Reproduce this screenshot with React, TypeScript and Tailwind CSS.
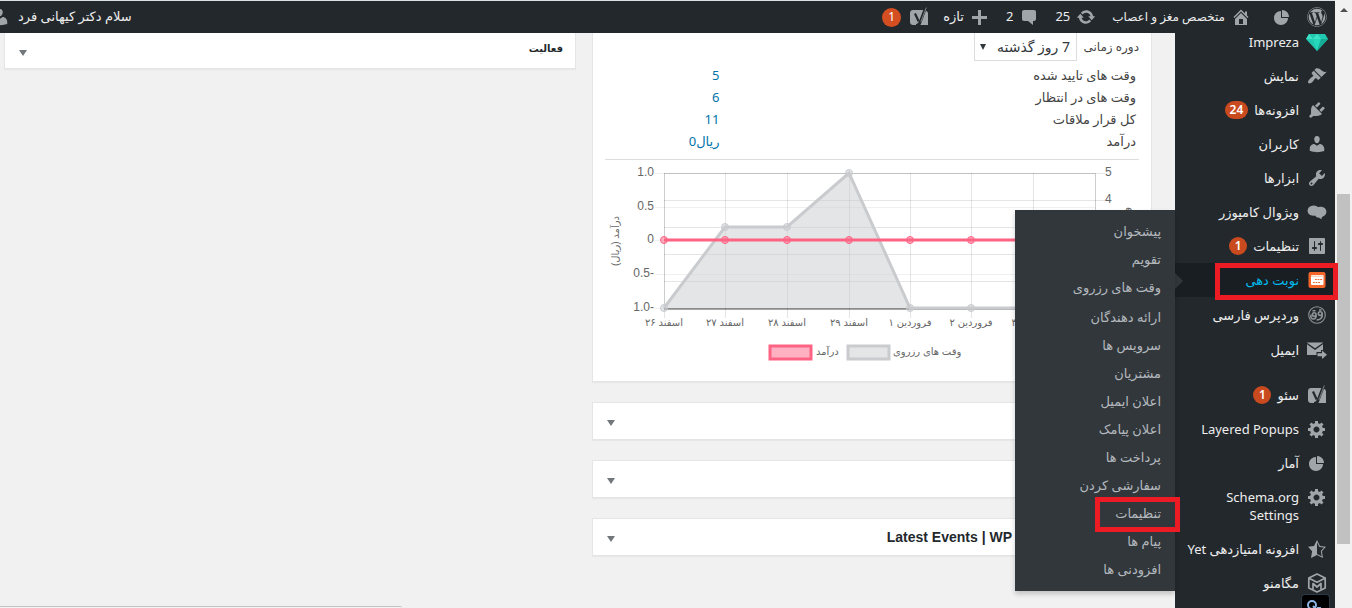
import type { ReactNode } from "react";
import clsx from "clsx";
import { FaWordpress } from "react-icons/fa";

const PATHS = {
  pie: "M10 10V3c3.87 0 7 3.13 7 7h-7zM9 4v7h7c0 3.87-3.13 7-7 7s-7-3.13-7-7 3.13-7 7-7z",
  home: "M16 8.5l1.53 1.53-1.06 1.06L10 4.6l-6.47 6.49-1.06-1.06L10 2.5l4 4v-2h2v4zm-6-2.46l6 5.99V18H4v-5.97zM12 17v-5H8v5h4z",
  update:
    "M10.2 3.28c3.53 0 6.43 2.61 6.92 6h2.08l-3.5 4-3.5-4h2.32c-.45-1.97-2.21-3.45-4.32-3.45-1.45 0-2.73.71-3.54 1.78L4.95 5.66C6.23 4.2 8.11 3.28 10.2 3.28zm-.4 13.44c-3.52 0-6.43-2.61-6.92-6H.8l3.5-4c1.17 1.33 2.33 2.67 3.5 4H5.48c.45 1.97 2.21 3.45 4.32 3.45 1.45 0 2.73-.71 3.54-1.78l1.71 1.95c-1.28 1.46-3.15 2.38-5.25 2.38z",
  comment:
    "M5 3h10c1.1 0 2 .9 2 2v7c0 1.1-.9 2-2 2h-1v4l-5-4H5c-1.1 0-2-.9-2-2V5c0-1.1.9-2 2-2z",
  plus: "M17 9v3h-6v6H8v-6H2V9h6V3h3v6h6z",
  brush:
    "M14.48 11.06L7.41 3.99l1.5-1.5c.5-.56 2.3-.47 3.51.32 1.21.8 1.43 1.28 2.91 2.1 1.18.64 2.45 1.26 4.45.85zm-.71.71L6.7 4.7 4.93 6.47c-.39.39-.39 1.02 0 1.41l1.06 1.06c.39.39.39 1.03 0 1.42-.6.6-1.43 1.11-2.21 1.69-.35.26-.7.53-1.01.84C1.43 14.23.4 16.08 1.4 17.07c.99 1 2.84-.03 4.18-1.36.31-.31.58-.66.85-1.02.57-.78 1.08-1.61 1.69-2.21.39-.39 1.02-.39 1.41 0l1.06 1.06c.39.39 1.02.39 1.41 0z",
  plug: "M13.11 4.36L9.87 7.6 8 5.73l3.24-3.24c.35-.34 1.05-.2 1.56.32.52.51.66 1.21.31 1.55zm-8 1.77l.91-1.12 9.01 9.01-1.19.84c-.71.71-2.63 1.16-3.82 1.16H6.14L4.9 17.26c-.59.59-1.54.59-2.12 0-.59-.58-.59-1.53 0-2.12l1.24-1.24v-3.88c0-1.13.4-3.19 1.09-3.89zm7.26 3.97l3.24-3.24c.34-.35 1.04-.21 1.55.31.52.51.66 1.21.31 1.55l-3.24 3.25z",
  user: "M10 9.25c-2.27 0-2.73-3.44-2.73-3.44C7 4.02 7.82 2 9.97 2c2.16 0 2.98 2.02 2.71 3.81 0 0-.41 3.44-2.68 3.44zm0 2.57L12.72 10c2.39 0 4.52 2.33 4.52 4.53v2.49s-3.65 1.13-7.24 1.13c-3.65 0-7.24-1.13-7.24-1.13v-2.49c0-2.25 1.94-4.48 4.47-4.48z",
  wrench:
    "M16.68 9.77c-1.34 1.34-3.3 1.67-4.95.99l-5.41 6.52c-.99.99-2.59.99-3.58 0s-.99-2.59 0-3.57l6.52-5.42c-.68-1.65-.35-3.61.99-4.95 1.28-1.28 3.12-1.62 4.72-1.06l-2.89 2.89 2.82 2.82 2.86-2.87c.53 1.58.18 3.39-1.08 4.65zM3.81 16.21c.4.39 1.04.39 1.43 0 .4-.4.4-1.04 0-1.43-.39-.4-1.03-.4-1.43 0-.39.39-.39 1.03 0 1.43z",
  composer:
    "M6.5 3.5C8.6 3.3 9.6 4.6 11 4.9c1.5.2 2.6-.3 4.3.1 2.3.5 4 2.3 4.1 4.6.1 2.3-1.3 4-3 4.6-.8.3-1.3.5-1.5 1.1l-.5 2-2.3-1.6C9.5 15.6 8.8 14.6 8.2 13.4 4.3 14.4.6 12.3.6 8.700c0-2.900 2.600-5 5.900-5.200z",
  sliders:
    "M18 17V3c0-.55-.45-1-1-1H3c-.55 0-1 .45-1 1v14c0 .55.45 1 1 1h14c.55 0 1-.45 1-1zM8 11h1c.55 0 1 .45 1 1s-.45 1-1 1H8v1.5c0 .28-.22.5-.5.5s-.5-.22-.5-.5V13H6c-.55 0-1-.45-1-1s.45-1 1-1h1V5.5c0-.28.22-.5.5-.5s.5.22.5.5V11zm5-2h-1c-.55 0-1-.45-1-1s.45-1 1-1h1V5.5c0-.28.22-.5.5-.5s.5.22.5.5V7h1c.55 0 1 .45 1 1s-.45 1-1 1h-1v5.5c0 .28-.22.5-.5.5s-.5-.22-.5-.5V9z",
  gear: "M18 12h-2.18c-.17.7-.44 1.35-.81 1.93l1.54 1.54-2.1 2.1-1.54-1.54c-.58.36-1.23.63-1.91.79V19H8v-2.18c-.68-.16-1.33-.43-1.91-.79l-1.54 1.54-2.12-2.12 1.54-1.54c-.36-.58-.63-1.23-.79-1.91H1V9.03h2.17c.16-.7.44-1.35.8-1.94L2.43 5.55l2.1-2.1 1.54 1.54c.58-.37 1.24-.64 1.93-.81V2h3v2.18c.68.16 1.33.43 1.91.79l1.54-1.54 2.12 2.12-1.54 1.54c.36.59.64 1.24.8 1.94H18V12zm-8.500 1.500c1.660 0 3-1.340 3-3s-1.340-3-3-3-3 1.340-3 3 1.340 3 3 3z",
  starHalf:
    "M10 1L7 7l-6 .75 4.13 4.62L4 19l6-3 6 3-1.12-6.63L19 7.75 13 7zm0 2.24l2.34 4.69 4.65.58-3.18 3.56.87 5.15L10 14.88V3.24z",
};

type IconName = keyof typeof PATHS;

function Icon({ name }: { name: IconName }) {
  return (
    <svg viewBox="0 0 20 20" className="h-5 w-5 shrink-0 fill-[#a0a5aa]" aria-hidden="true">
      <path d={PATHS[name]} fillRule="evenodd" />
    </svg>
  );
}

function GemIcon() {
  return (
    <svg viewBox="0 0 22 20" className="h-5 w-[22px] shrink-0" aria-hidden="true">
      <path d="M3 2h16l3 5-11 12L0 7z" fill="#1fc8ae" />
      <path d="M3 2l4 5H0zM11 2l4 5H7z" fill="#3fe0c6" />
      <path d="M7 7h8l-4 12z" fill="#27d7bb" />
      <path d="M15 7h7L11 19z" fill="#16ab95" />
    </svg>
  );
}

function YoastIcon() {
  return (
    <svg viewBox="0 0 20 20" className="h-5 w-5 shrink-0" fill="none" aria-hidden="true">
      <path d="M4 3h11.500L10.500 18H4c-1.700 0-3-1.300-3-3V6c0-1.700 1.300-3 3-3z" fill="#a0a5aa" />
      <path d="M16.500 3.400C18 3.900 19 5 19 6.500V18h-8z" fill="#a0a5aa" />
      <path d="M16.500 1L11 15.500C10.200 17.600 9 18.500 7 18.500" stroke="#23282d" strokeWidth="2.800" />
      <path d="M6 6.500l3.700 8" stroke="#23282d" strokeWidth="2.200" />
      <path d="M17.300 .5L11.800 15" stroke="#a0a5aa" strokeWidth=".7" />
    </svg>
  );
}

function BookingIcon() {
  return (
    <svg viewBox="0 0 20 20" className="h-5 w-5 shrink-0" aria-hidden="true">
      <rect x="1.500" y="2" width="17" height="16" rx="2" fill="#f4652a" />
      <rect x="4" y="5" width="12.500" height="10" rx="1" fill="#fff" />
      <path d="M4 5.500h12.500v1.500H4z" fill="#ffd2bd" />
      <path d="M8 9.500h7M6 12.500h7" stroke="#f4652a" strokeDasharray="1.800 0.800" />
    </svg>
  );
}

function PersianWpIcon() {
  return (
    <svg viewBox="0 0 20 20" className="h-5 w-5 shrink-0" fill="none" stroke="#8f9498" strokeWidth="1.600" aria-hidden="true">
      <circle cx="10" cy="10" r="8.300" strokeWidth="1.100" />
      <circle cx="7.200" cy="9.600" r="1.800" />
      <circle cx="13.200" cy="8.600" r="1.900" />
      <path d="M9 9.600c.4 2.800-.6 4.400-2.600 4.400s-3-1.800-2.400-4.400M15.200 8.600c.4 4-1.400 6.600-5.600 6.200M5.500 5.800h3M12 5h2.500" />
    </svg>
  );
}

function MailIcon() {
  return (
    <svg viewBox="0 0 20 20" className="h-5 w-5 shrink-0 fill-[#a0a5aa]" aria-hidden="true">
      <path d="M0 4.200L8 10l8-5.800V10h-2v2H9.500v3H0z" />
      <path d="M0 2.500h16v.3L8 8.200 0 2.800z" />
      <path d="M10.500 13.200H15v-2.700l5 4.200-5 4.300v-2.800h-4.500z" />
    </svg>
  );
}

function MegaMenuIcon() {
  return (
    <svg viewBox="0 0 20 20" className="h-5 w-5 shrink-0" fill="none" stroke="#a0a5aa" strokeWidth="1.700" strokeLinejoin="round" aria-hidden="true">
      <path d="M10 1l8.200 4v10L10 19l-8.200-4V5z" />
      <path d="M2 5.200l8 4 8-4M6 16.500v-6l4 3.500 4-3.500v6" />
    </svg>
  );
}

function Badge({ children }: { children: ReactNode }) {
  return (
    <span className="flex h-[18px] min-w-[18px] items-center justify-center rounded-full bg-[#ca4a1f] px-[5px] text-[12px] font-semibold text-white">
      {children}
    </span>
  );
}

const SUBMENU = [
  "پیشخوان",
  "تقویم",
  "وقت های رزروی",
  "ارائه دهندگان",
  "سرویس ها",
  "مشتریان",
  "اعلان ایمیل",
  "اعلان پیامک",
  "پرداخت ها",
  "سفارشی کردن",
  "تنظیمات",
  "پیام ها",
  "افزودنی ها",
];

function Submenu() {
  return (
    <ul className="absolute -top-[53px] right-full w-40 bg-[#32373c] pt-2 pb-[7px] shadow-[0_3px_5px_rgba(0,0,0,0.2)]">
      {SUBMENU.map((label, i) => (
        <li key={label} className={clsx("relative", i === 3 && "pt-0.5")}>
          <a href="#" className="flex h-7 items-center px-3.5 text-[13px] text-[#b4b9be]">
            {label}
          </a>
          {label === "تنظیمات" && (
            <span className="pointer-events-none absolute -top-[3px] -right-[5px] h-[35px] w-[85px] border-5 border-[#ed1c24]" />
          )}
        </li>
      ))}
    </ul>
  );
}

type MenuItem = {
  label: string;
  icon: ReactNode;
  badge?: string;
  active?: boolean;
  className?: string;
};

const MENU: MenuItem[] = [
  { label: "Impreza", icon: <GemIcon /> },
  { label: "نمایش", icon: <Icon name="brush" /> },
  { label: "افزونه‌ها", icon: <Icon name="plug" />, badge: "24" },
  { label: "کاربران", icon: <Icon name="user" /> },
  { label: "ابزارها", icon: <Icon name="wrench" /> },
  { label: "ویژوال کامپوزر", icon: <Icon name="composer" /> },
  { label: "تنظیمات", icon: <Icon name="sliders" />, badge: "1" },
  { label: "نوبت دهی", icon: <BookingIcon />, active: true },
  { label: "وردپرس فارسی", icon: <PersianWpIcon />, className: "pt-px" },
  { label: "ایمیل", icon: <MailIcon />, className: "pt-px" },
  { label: "سئو", icon: <YoastIcon />, badge: "1", className: "mt-[11px]" },
  { label: "Layered Popups", icon: <Icon name="gear" /> },
  { label: "آمار", icon: <Icon name="pie" /> },
  { label: "Schema.org Settings", icon: <Icon name="gear" /> },
  { label: "افزونه امتیازدهی Yet", icon: <Icon name="starHalf" /> },
  { label: "مگامنو", icon: <MegaMenuIcon /> },
];

function Sidebar() {
  return (
    <nav className="relative z-10 -mt-2 w-40 shrink-0 bg-[#23282d]">
      <ul>
        {MENU.map((item) => (
          <li key={item.label} className={clsx("relative", item.className)}>
            <a
              href="#"
              className={clsx(
                "flex items-start text-[13px] leading-[18px]",
                item.active ? "bg-[#191e23] text-[#00b9eb]" : "text-[#eee]"
              )}
            >
              <span className="flex h-[34px] w-9 shrink-0 items-center justify-center">{item.icon}</span>
              <span className={clsx("py-2", item.label.startsWith("Schema") ? "w-24" : "whitespace-nowrap")}>
                {item.label}
              </span>
              {item.badge && (
                <span className="py-2 ps-1.5">
                  <Badge>{item.badge}</Badge>
                </span>
              )}
            </a>
            {item.active && (
              <>
                <span className="absolute top-2.5 left-0 border-y-8 border-l-8 border-y-transparent border-l-[#32373c]" />
                <Submenu />
                <span className="pointer-events-none absolute top-0 -right-[3px] h-[37px] w-[123px] border-5 border-[#ed1c24]" />
              </>
            )}
          </li>
        ))}
      </ul>
    </nav>
  );
}

function AdminBar() {
  return (
    <header className="relative z-20 flex h-[33px] shrink-0 items-center border-t border-[#dcdfe3] bg-[#23282d] text-[13px] text-[#eee]">
      <a href="#" aria-label="WordPress" className="flex w-9 justify-center">
        <FaWordpress className="h-5 w-5 text-[#a0a5aa]" />
      </a>
      <a href="#" aria-label="Statistics" className="flex w-[34px] justify-center">
        <Icon name="pie" />
      </a>
      <a href="#" className="ms-3.5 flex items-center gap-1.5 text-[12px]">
        <Icon name="home" />
        متخصص مغز و اعصاب
      </a>
      <a href="#" className="ms-4 flex items-center gap-1.5">
        <Icon name="update" />
        25
      </a>
      <a href="#" className="ms-4 flex items-center gap-1.5">
        <Icon name="comment" />2
      </a>
      <a href="#" className="ms-4 flex items-center gap-1.5">
        <Icon name="plus" />
        تازه
      </a>
      <a href="#" className="ms-3.5 flex items-center gap-2">
        <YoastIcon />
        <span className="flex h-[19px] w-[19px] items-center justify-center rounded-full bg-[#d54e21] text-[12px] text-white">1</span>
      </a>
      <a href="#" className="ms-auto -me-2.5 flex items-center gap-2">
        سلام دکتر کیهانی فرد
        <Icon name="user" />
      </a>
    </header>
  );
}

function Toggle({ label }: { label: string }) {
  return (
    <button type="button" aria-label={label} className="flex h-9 w-9 items-center justify-center pt-1">
      <span className="border-x-4 border-t-6 border-x-transparent border-t-[#72777c]" />
    </button>
  );
}

function CollapsedBox({ title, name }: { title?: ReactNode; name: string }) {
  return (
    <section className="flex items-center justify-between border border-[#e5e5e5] bg-white shadow-[0_1px_1px_rgba(0,0,0,0.04)]">
      <h2 className="px-3">{title}</h2>
      <Toggle label={name} />
    </section>
  );
}

// the last tick has no label of its own
const TICKS = [
  { x: 59, label: "اسفند ۲۶" },
  { x: 120, label: "اسفند ۲۷" },
  { x: 182, label: "اسفند ۲۸" },
  { x: 244, label: "اسفند ۲۹" },
  { x: 305, label: "فروردین ۱" },
  { x: 366, label: "فروردین ۲" },
  { x: 428, label: "فروردین ۳" },
  { x: 490, label: "" },
];

const BOOKINGS = [148, 67, 67, 13, 148, 148, 148, 148];

const LEFT_AXIS = [
  { y: 13, label: "1.0" },
  { y: 47, label: "0.5" },
  { y: 80, label: "0" },
  { y: 114, label: "0.5-" },
  { y: 148, label: "1.0-" },
];

const RIGHT_AXIS = [13, 40, 67, 94, 121, 148];

function Chart() {
  const line = TICKS.map((tick, i) => `${tick.x},${BOOKINGS[i]}`).join(" ");

  return (
    <svg
      viewBox="0 0 534 210"
      direction="ltr"
      className="block w-full fill-[#666] font-['Liberation_Sans','DejaVu_Sans',sans-serif] text-[12px]"
      role="img"
    >
      <g stroke="#000" strokeOpacity="0.1" shapeRendering="crispEdges">
        {TICKS.map((tick) => (
          <path key={tick.x} d={`M${tick.x + 0.5} 13v145`} />
        ))}
        {LEFT_AXIS.map(({ y }) => (
          <path key={y} d={`M50 ${y + 0.5}H490`} strokeOpacity="0.06" />
        ))}
        {RIGHT_AXIS.map((y) => (
          <path key={y} d={`M59 ${y + 0.5}H500`} />
        ))}
        <path d="M59.5 148V13.5H490.5V148" fill="none" strokeOpacity="0.1" />
        <path d="M59 148.5H490" strokeWidth="2" strokeOpacity="0.35" />
      </g>

      <polygon points={`59,148 ${line} 490,148`} fill="#c9cbcf" fillOpacity="0.5" />
      <polyline points={line} fill="none" stroke="#c9cbcf" strokeWidth="3" />
      {TICKS.map((tick, i) => (
        <circle key={tick.x} cx={tick.x} cy={BOOKINGS[i]} r="3.5" fill="#c9cbcf" fillOpacity="0.5" stroke="#c9cbcf" />
      ))}
      <path d="M59 80H490" stroke="#ff6384" strokeWidth="3" />
      {TICKS.map((tick) => (
        <circle key={tick.x} cx={tick.x} cy="80" r="3.5" fill="#ff6384" fillOpacity="0.5" stroke="#ff6384" />
      ))}

      {LEFT_AXIS.map(({ y, label }) => (
        <text key={y} x="49" y={y + 3} textAnchor="end">
          {label}
        </text>
      ))}
      <text x="500" y="16">5</text>
      <text x="500" y="43">4</text>

      <g className="text-[10px]">
        {TICKS.filter((tick) => tick.label).map((tick) => (
          <text key={tick.x} x={tick.x} y="166" textAnchor="middle">
            {tick.label}
          </text>
        ))}
        <text transform="translate(14 81) rotate(-90)" textAnchor="middle" direction="rtl">
          درآمد (ریال)
        </text>
        <text transform="translate(524 81) rotate(-90)" textAnchor="middle">
          وقت های رزروی
        </text>
        <rect x="165" y="186" width="41" height="13" fill="#ffb1c1" stroke="#ff6384" strokeWidth="3" />
        <text x="211" y="195">درآمد</text>
        <rect x="243" y="186" width="41" height="13" fill="#e4e5e7" stroke="#c9cbcf" strokeWidth="3" />
        <text x="288" y="195">وقت های رزروی</text>
      </g>
    </svg>
  );
}

const STATS = [
  ["وقت های تایید شده", "5"],
  ["وقت های در انتظار", "6"],
  ["کل قرار ملاقات", "11"],
  ["درآمد", "ریال0"],
];

function StatsBox() {
  return (
    <section className="border border-t-0 border-[#e5e5e5] bg-white px-3 pb-[11px] shadow-[0_1px_1px_rgba(0,0,0,0.04)]">
      <div className="flex items-center justify-start text-[12px] text-[#444]">
        <label htmlFor="period" className="w-[62px]">دوره زمانی</label>
        <div className="relative">
          <select
            id="period"
            className="h-7 w-[103px] appearance-none border border-t-0 border-[#ddd] bg-white ps-1.5 text-[14px] text-[#32373c]"
          >
            <option>7 روز گذشته</option>
          </select>
          <span className="pointer-events-none absolute top-[11px] left-1.5 border-x-3 border-t-6 border-x-transparent border-t-[#32373c]" />
        </div>
      </div>

      <table className="mt-[3px] w-full text-[13px]">
        <tbody>
          {STATS.map(([name, value]) => (
            <tr key={name} className="h-[22px] leading-5">
              <th scope="row" className="w-[78%] px-[3px] text-start font-normal text-[#444]">
                {name}
              </th>
              <td className="px-[3px] text-[#0073aa]">
                <a href="#">{value}</a>
              </td>
            </tr>
          ))}
        </tbody>
      </table>

      <div className="mt-[7px] border-t border-[#ddd]">
        <Chart />
      </div>
    </section>
  );
}

export default function App() {
  return (
    <div className="relative flex h-screen overflow-hidden bg-[#f1f1f1] font-['Noto_Sans','DejaVu_Sans',sans-serif]">
      <div dir="rtl" className="relative z-10 flex min-w-0 flex-1 flex-col">
        <AdminBar />
        <div className="flex min-h-0 flex-1">
          <Sidebar />
          <main className="grid flex-1 grid-cols-[560fr_572fr] items-start gap-4 pr-[23px] pl-1">
            <div className="flex flex-col gap-5">
              <StatsBox />
              <CollapsedBox name="Toggle panel" />
              <CollapsedBox name="Toggle panel" />
              <CollapsedBox
                name="Toggle panel"
                title={
                  <span dir="ltr" className="block pr-[127px] font-['Liberation_Sans',sans-serif] text-[14px] font-bold text-[#23282d]">
                    Latest Events | WP
                  </span>
                }
              />
            </div>
            <section className="flex h-9 items-center justify-between border border-t-0 border-[#e5e5e5] bg-white shadow-[0_1px_1px_rgba(0,0,0,0.04)]">
              <h2 className="px-3 pb-1 text-[10px] font-bold text-[#23282d]">فعالیت</h2>
              <Toggle label="Toggle panel" />
            </section>
          </main>
        </div>
        <div dir="ltr" className="absolute right-[5px] bottom-0 z-20 h-3.5 w-[29px] overflow-hidden rounded-t-sm border border-b-0 border-[#2c3947] bg-black">
          <svg viewBox="0 0 28 14" className="h-3.5 w-7" fill="none" stroke="#8db4e2" strokeWidth="2" aria-hidden="true">
            <circle cx="10" cy="10" r="4" />
            <path d="M11 11l3 3M15 13h4" />
          </svg>
        </div>
        <div className="absolute bottom-0 left-0 h-0.5 w-[402px] rounded-tr-sm border-t border-[#c4c4c4] bg-[#f3f3f3]" />
      </div>

      <div className="flex w-[17px] shrink-0 flex-col items-center bg-[#f1f1f1]" aria-hidden="true">
        <span className="mt-2 border-x-4 border-b-4 border-x-transparent border-b-[#505050]" />
        <span className="mt-[182px] h-[350px] w-[13px] bg-[#c1c1c1]" />
      </div>
    </div>
  );
}
